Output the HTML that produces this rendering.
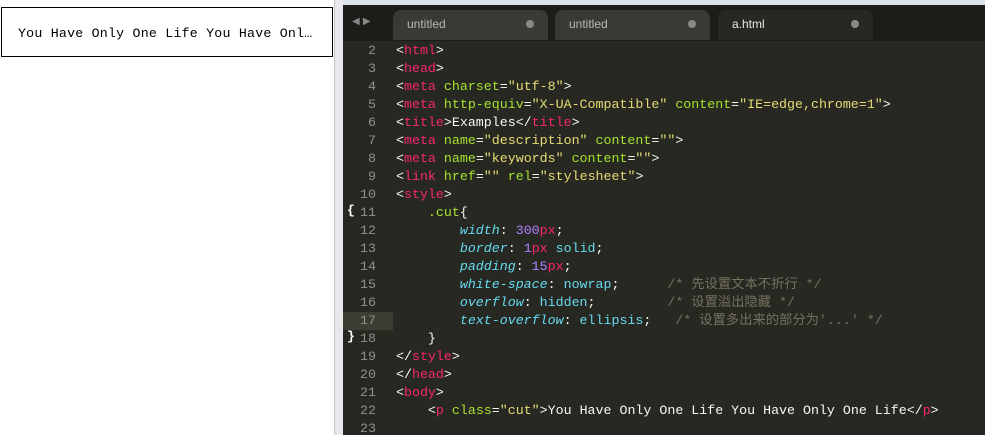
<!DOCTYPE html>
<html><head><meta charset="utf-8"><style>
body{margin:0;width:985px;height:435px;overflow:hidden;background:#fff;position:relative;font-family:"Liberation Mono","Noto Sans CJK SC",monospace}
.box{position:absolute;left:1px;top:7px;width:330px;height:48px;border:1px solid #000;}
.box span{position:absolute;left:16px;top:18px;font-size:13.3px;color:#000;white-space:nowrap;letter-spacing:0.2px}
.strip{position:absolute;left:334px;top:0;width:9px;height:435px;background:#e6e8ec;border-left:1px solid #c8c8c8}
.ed{position:absolute;left:343px;top:0;width:642px;height:435px;background:#272822}
.top{position:absolute;left:343px;top:0;width:642px;height:5px;background:#dde3ec}
.tabbar{position:absolute;left:343px;top:5px;width:642px;height:36px;background:#1c1c19}
.tab{position:absolute;top:10px;height:30px;background:#3a3a35;border-radius:8px 8px 0 0;color:#b8b8b0;font:12px "Liberation Sans",sans-serif;line-height:28px;padding-left:14px;box-sizing:border-box}
.tab i{position:absolute;right:14px;top:10px;width:8px;height:8px;border-radius:50%;background:#8a8a85}
.tab.a{background:#272822;color:#e8e8e0}
.arr{position:absolute;left:352px;top:16px;color:#888;font-size:10px;font-family:"DejaVu Sans"}
.ln{position:absolute;left:343px;width:33px;text-align:right;color:#8f908a;font-size:13.3px;line-height:18px;height:18px}
.cd{position:absolute;left:396px;white-space:pre;color:#f8f8f2;font-size:13.3px;line-height:18px;height:18px}
.t{color:#f92672}.s{color:#e6db74}.a2{color:#a6e22e}.p{color:#66d9ef;font-style:italic}.n{color:#ae81ff}.c{color:#75715e}.v{color:#66d9ef}
.hl{position:absolute;left:343px;top:312px;width:50px;height:18px;background:#3e3d32}
</style></head><body>
<div class="box"><span>You Have Only One Life You Have Onl…</span></div>
<div class="strip"></div>
<div class="ed"></div>
<div class="top"></div>
<div class="tabbar"></div>
<div class="arr">◀ ▶</div>
<div class="tab" style="left:393px;width:155px">untitled<i></i></div>
<div class="tab" style="left:555px;width:155px">untitled<i></i></div>
<div class="tab a" style="left:718px;width:155px">a.html<i></i></div>
<div class="hl"></div>
<div id="g"></div>
<script>
var L=[
'&lt;<span class="t">html</span>&gt;',
'&lt;<span class="t">head</span>&gt;',
'&lt;<span class="t">meta</span> <span class="a2">charset</span>=<span class="s">"utf-8"</span>&gt;',
'&lt;<span class="t">meta</span> <span class="a2">http-equiv</span>=<span class="s">"X-UA-Compatible"</span> <span class="a2">content</span>=<span class="s">"IE=edge,chrome=1"</span>&gt;',
'&lt;<span class="t">title</span>&gt;Examples&lt;/<span class="t">title</span>&gt;',
'&lt;<span class="t">meta</span> <span class="a2">name</span>=<span class="s">"description"</span> <span class="a2">content</span>=<span class="s">""</span>&gt;',
'&lt;<span class="t">meta</span> <span class="a2">name</span>=<span class="s">"keywords"</span> <span class="a2">content</span>=<span class="s">""</span>&gt;',
'&lt;<span class="t">link</span> <span class="a2">href</span>=<span class="s">""</span> <span class="a2">rel</span>=<span class="s">"stylesheet"</span>&gt;',
'&lt;<span class="t">style</span>&gt;',
'    <span class="a2">.cut</span>{',
'        <span class="p">width</span>: <span class="n">300</span><span class="t">px</span>;',
'        <span class="p">border</span>: <span class="n">1</span><span class="t">px</span> <span class="v">solid</span>;',
'        <span class="p">padding</span>: <span class="n">15</span><span class="t">px</span>;',
'        <span class="p">white-space</span>: <span class="v">nowrap</span>;      <span class="c">/* 先设置文本不折行 */</span>',
'        <span class="p">overflow</span>: <span class="v">hidden</span>;         <span class="c">/* 设置溢出隐藏 */</span>',
'        <span class="p">text-overflow</span>: <span class="v">ellipsis</span>;   <span class="c">/* 设置多出来的部分为\'...\' */</span>',
'    }',
'&lt;/<span class="t">style</span>&gt;',
'&lt;/<span class="t">head</span>&gt;',
'&lt;<span class="t">body</span>&gt;',
'    &lt;<span class="t">p</span> <span class="a2">class</span>=<span class="s">"cut"</span>&gt;You Have Only One Life You Have Only One Life&lt;/<span class="t">p</span>&gt;',
''];
var h='';
for(var i=0;i<L.length;i++){var y=42+i*18;
h+='<div class="ln" style="top:'+y+'px">'+(i+2)+'</div><div class="cd" style="top:'+y+'px">'+L[i]+'</div>';}
h+='<div style="position:absolute;left:347px;top:203px;color:#fff;font-size:13px;font-weight:bold">{</div><div style="position:absolute;left:347px;top:329px;color:#fff;font-size:13px;font-weight:bold">}</div>';
document.getElementById('g').innerHTML=h;
</script>
</body></html>
